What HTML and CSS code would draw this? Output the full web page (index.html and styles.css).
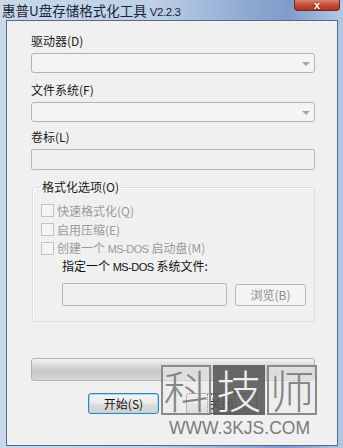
FILE: index.html
```html
<!DOCTYPE html>
<html lang="zh-CN">
<head>
<meta charset="utf-8">
<title>惠普U盘存储格式化工具</title>
<link rel="stylesheet" href="styles.css">
</head>
<body>
<div class="window">
  <div class="titlebar">
    <span class="title">惠普U盘存储格式化工具 <span class="ver">V2.2.3</span></span>
    <span class="close"><span class="close-x">x</span></span>
  </div>
  <div class="client">
    <div class="label l1">驱动器(D)</div>
    <div class="combo"><span class="arrow"></span></div>
    <div class="label l2">文件系统(F)</div>
    <div class="combo"><span class="arrow"></span></div>
    <div class="label l3">卷标(L)</div>
    <div class="textbox"></div>
    <fieldset class="group">
      <legend class="legend">格式化选项(O)</legend>
      <div class="check-row"><span class="checkbox"></span><span class="disabled">快速格式化(Q)</span></div>
      <div class="check-row"><span class="checkbox"></span><span class="disabled">启用压缩(E)</span></div>
      <div class="check-row"><span class="checkbox"></span><span class="disabled">创建一个 <span class="lat">MS-DOS</span> 启动盘(M)</span></div>
      <div class="sysfile">指定一个 <span class="lat">MS-DOS</span> 系统文件:</div>
      <div class="file-row">
        <div class="file-box"></div>
        <div class="btn btn-disabled">浏览(B)</div>
      </div>
    </fieldset>
    <div class="progress"></div>
    <div class="buttons">
      <div class="btn btn-default">开始(S)</div>
      <div class="btn btn-normal"><span class="focus">关闭</span></div>
    </div>
  </div>
  <div class="watermark">
    <div class="wm-boxes">
      <span class="wm wm-light">科</span>
      <span class="wm wm-dark">技</span>
      <span class="wm wm-light">师</span>
    </div>
    <div class="wm-url">WWW.3KJS.COM</div>
  </div>
</div>
</body>
</html>
```
FILE: styles.css
```css
html, body {
  margin: 0;
  padding: 0;
}
body {
  width: 343px;
  height: 448px;
  overflow: hidden;
  font-family: "Noto Sans CJK SC", "Liberation Sans", sans-serif;
  font-size: 12px;
}
.window {
  position: relative;
  width: 343px;
  height: 448px;
  background: linear-gradient(to right, #c8d9ed 0%, #bccfe7 45%, #8fa9d2 72%, #7f9bc9 84%, #b3c8e4 100%);
}
.titlebar {
  height: 20px;
  display: flex;
  justify-content: space-between;
  align-items: flex-start;
}
.title {
  font-size: 13.5px;
  line-height: 20px;
  padding-left: 2px;
  color: #1b2430;
}
.ver {
  font-family: "Liberation Sans", sans-serif;
  font-size: 11.5px;
  letter-spacing: -0.4px;
}
.lat {
  font-family: "Liberation Sans", sans-serif;
  font-size: 11px;
  letter-spacing: -0.5px;
}
.close {
  width: 44px;
  height: 10px;
  margin-right: 3px;
  border: 1px solid #6e2a22;
  border-top: none;
  border-radius: 0 0 4px 4px;
  background: linear-gradient(#d9826e, #c44a3a 50%, #b33322);
  display: flex;
  justify-content: center;
  align-items: center;
}
.close-x {
  color: #fff;
  font-family: "Liberation Sans", sans-serif;
  font-weight: bold;
  font-size: 11px;
  line-height: 10px;
  text-shadow: 0 0 2px #5a1a10;
}
.client {
  margin-left: 6px;
  width: 332px;
  height: 426px;
  box-sizing: border-box;
  border: 1px solid #54688a;
  background: #f0f0f0;
  padding-left: 24px;
  display: flex;
  flex-direction: column;
  align-items: flex-start;
}
.label {
  height: 16px;
  line-height: 16px;
  color: #1a1a1a;
  margin-bottom: 4px;
}
.l1 { margin-top: 12px; }
.l2 { margin-top: 9px; }
.l3 { margin-top: 7px; }
.combo {
  position: relative;
  width: 284px;
  height: 20px;
  box-sizing: border-box;
  border: 1px solid #b4b4b4;
  border-radius: 3px;
  background: #f4f4f4;
}
.arrow {
  position: absolute;
  right: 4px;
  top: 8px;
  width: 0;
  height: 0;
  border-left: 4px solid transparent;
  border-right: 4px solid transparent;
  border-top: 4px solid #a4a4a4;
}
.textbox {
  width: 284px;
  height: 21px;
  box-sizing: border-box;
  border: 1px solid #b8b8b8;
  border-radius: 2px;
  background: #f0f0f0;
}
.group {
  margin: 9px 0 0 1px;
  width: 283px;
  box-sizing: border-box;
  border: 1px solid #d5dfe5;
  border-radius: 3px;
  padding: 6px 8px 15px 8px;
  box-shadow: inset 1px 1px 0 #fff;
}
.legend {
  padding: 0 2px;
  margin-left: -1px;
  height: 16px;
  line-height: 16px;
  color: #1a1a1a;
}
.check-row {
  height: 19px;
  display: flex;
  align-items: center;
  gap: 3px;
  line-height: 16px;
}
.checkbox {
  width: 13px;
  height: 13px;
  box-sizing: border-box;
  border: 1px solid #c3c3c3;
  background: #f4f4f4;
}
.disabled {
  color: #9a9a9a;
}
.sysfile {
  margin-left: 21px;
  line-height: 16px;
  height: 16px;
  color: #111;
}
.file-row {
  margin: 9px 0 0 21px;
  display: flex;
  align-items: flex-start;
  gap: 8px;
}
.file-box {
  width: 165px;
  height: 23px;
  box-sizing: border-box;
  border: 1px solid #b8b8b8;
  border-radius: 2px;
  background: #f0f0f0;
}
.btn {
  width: 71px;
  height: 22px;
  box-sizing: border-box;
  border-radius: 3px;
  display: flex;
  align-items: center;
  justify-content: center;
  line-height: 16px;
}
.btn-disabled {
  margin-top: 1px;
  border: 1px solid #b5b9bc;
  background: #f4f4f4;
  color: #8c8c8c;
}
.progress {
  margin-top: 36px;
  width: 284px;
  height: 23px;
  box-sizing: border-box;
  border: 1px solid #b2b2b2;
  border-radius: 3px;
  background: linear-gradient(#f4f4f4 0%, #e2e2e2 20%, #d0d0d0 45%, #c9c9c9 60%, #d6d6d6 100%);
}
.buttons {
  margin: 12px 0 0 57px;
  display: flex;
  gap: 27px;
}
.btn-default {
  height: 21px;
  border: 1px solid #3c7fb1;
  background: linear-gradient(#f4f4f4 0%, #ececec 45%, #dcdcdc 55%, #d2d2d2 100%);
  box-shadow: inset 0 0 0 1px #9fdcf6;
  color: #111;
}
.btn-normal {
  height: 21px;
  border: 1px solid #707070;
  background: linear-gradient(#f2f2f2 0%, #ebebeb 45%, #dddddd 55%, #cfcfcf 100%);
  color: #111;
}
.focus {
  outline: 1px dotted #333;
  outline-offset: 1px;
}
.watermark {
  position: absolute;
  left: 161px;
  top: 365px;
  width: 160px;
}
.wm-boxes {
  display: flex;
  gap: 2px;
}
.wm {
  width: 50px;
  height: 50px;
  box-sizing: border-box;
  display: flex;
  align-items: center;
  justify-content: center;
  font-family: "Noto Sans CJK SC", sans-serif;
  font-weight: 200;
  font-size: 45px;
  line-height: 50px;
}
.wm-light {
  border: 2px solid #8a8a8a;
  background: rgba(235, 235, 235, 0.55);
  color: #858585;
}
.wm-dark {
  width: 52px;
  background: rgba(90, 90, 90, 0.9);
  color: #efefef;
}
.wm-url {
  margin: 4px 0 0 8px;
  font-family: "Liberation Sans", sans-serif;
  font-size: 17.5px;
  line-height: 18px;
  color: #7b7b7b;
  white-space: nowrap;
}
```
